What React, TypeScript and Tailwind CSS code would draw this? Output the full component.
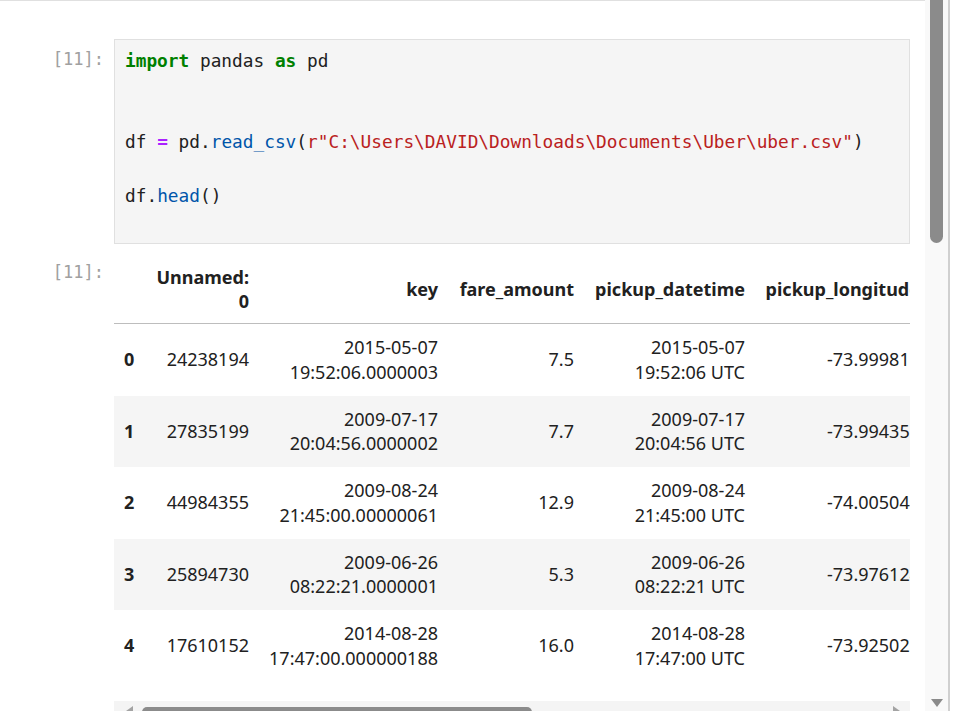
import React from 'react';

const mono = { fontFamily: '"DejaVu Sans Mono", "Liberation Mono", monospace' };

const rows = [
  ['0', '24238194', ['2015-05-07', '19:52:06.0000003'], '7.5', ['2015-05-07', '19:52:06 UTC'], '-73.999817'],
  ['1', '27835199', ['2009-07-17', '20:04:56.0000002'], '7.7', ['2009-07-17', '20:04:56 UTC'], '-73.994355'],
  ['2', '44984355', ['2009-08-24', '21:45:00.00000061'], '12.9', ['2009-08-24', '21:45:00 UTC'], '-74.005043'],
  ['3', '25894730', ['2009-06-26', '08:22:21.0000001'], '5.3', ['2009-06-26', '08:22:21 UTC'], '-73.976124'],
  ['4', '17610152', ['2014-08-28', '17:47:00.000000188'], '16.0', ['2014-08-28', '17:47:00 UTC'], '-73.925023'],
];

function Cell({ v }: { v: string | string[] }) {
  if (Array.isArray(v)) {
    return (
      <>
        {v.map((line) => (
          <div key={line}>{line}</div>
        ))}
      </>
    );
  }
  return <>{v}</>;
}

export default function App() {
  return (
    <div className="w-[970px] h-[711px] overflow-hidden bg-white flex">
      {/* NOTEBOOK */}
      <div className="w-[925px] h-full border-t border-[#e0e0e0] pt-[38px]">
        {/* input cell */}
        <div className="flex">
          <div
            className="w-[114px] pr-[10px] text-right text-[17px] leading-[27px] pt-[7px] text-[#a0a0a0]"
            style={mono}
          >
            [11]:
          </div>
          <div
            className="w-[796px] bg-[#f5f5f5] border border-[#e0e0e0] px-[10px] py-[7px] text-[17.8px] leading-[27px] text-[#212121] whitespace-pre"
            style={mono}
          >
            <div>
              <span className="text-[#008000] font-bold">import</span> pandas <span className="text-[#008000] font-bold">as</span> pd
            </div>
            <div>&nbsp;</div>
            <div>&nbsp;</div>
            <div>
              df <span className="text-[#aa22ff] font-bold">=</span> pd.<span className="text-[#0055aa]">read_csv</span>(
              <span className="text-[#ba2121]">r"C:\Users\DAVID\Downloads\Documents\Uber\uber.csv"</span>)
            </div>
            <div>&nbsp;</div>
            <div>
              df.<span className="text-[#0055aa]">head</span>()
            </div>
            <div>&nbsp;</div>
          </div>
        </div>

        {/* output cell */}
        <div className="flex mt-[11px]">
          <div
            className="w-[114px] pr-[10px] text-right text-[17px] leading-[27px] pt-[4px] text-[#a0a0a0]"
            style={mono}
          >
            [11]:
          </div>
          <div className="w-[796px]">
            <div className="overflow-hidden">
              <table
                className="table-fixed w-[816px] border-collapse text-[18px] text-[#212121]"
                style={{ fontFamily: '"Noto Sans", "Open Sans", sans-serif' }}
              >
                <colgroup>
                  <col className="w-[31px]" />
                  <col className="w-[114px]" />
                  <col className="w-[189px]" />
                  <col className="w-[136px]" />
                  <col className="w-[171px]" />
                  <col className="w-[175px]" />
                </colgroup>
                <thead>
                  <tr className="border-b border-[#bdbdbd] font-bold leading-[24px]">
                    <th className="px-[10px] py-[10px]"></th>
                    <th className="px-[10px] py-[10px] text-right align-middle">
                      <div>Unnamed:</div>
                      <div>0</div>
                    </th>
                    <th className="px-[10px] text-right align-middle whitespace-nowrap">key</th>
                    <th className="px-[10px] text-right align-middle whitespace-nowrap">fare_amount</th>
                    <th className="px-[10px] text-right align-middle whitespace-nowrap">pickup_datetime</th>
                    <th className="px-[10px] text-right align-middle whitespace-nowrap">pickup_longitude</th>
                  </tr>
                </thead>
                <tbody>
                  {rows.map((r, i) => (
                    <tr key={i} className={`leading-[24.75px] ${i % 2 === 1 ? 'bg-[#f5f5f5]' : ''}`}>
                      <th className="px-[10px] py-[11px] text-left font-bold align-middle">{r[0] as string}</th>
                      {r.slice(1).map((v, j) => (
                        <td key={j} className="px-[10px] py-[11px] text-right align-middle whitespace-nowrap">
                          <Cell v={v} />
                        </td>
                      ))}
                    </tr>
                  ))}
                </tbody>
              </table>
            </div>

            {/* horizontal scrollbar */}
            <div className="mt-[19px] h-[17px] bg-[#f4f4f4] flex items-start pt-[5px] relative">
              <svg width="14" height="10" viewBox="0 0 14 10" className="ml-[8px] mt-[0px]">
                <polygon points="4,5 11,0 11,10" fill="#a3a3a3" />
              </svg>
              <div className="ml-[6px] w-[390px] h-[10px] rounded-full bg-[#8b8b8b] mt-[1px]" />
              <div className="flex-1" />
              <svg width="14" height="10" viewBox="0 0 14 10" className="mr-[6px]">
                <polygon points="10,5 3,0 3,10" fill="#a3a3a3" />
              </svg>
            </div>
          </div>
        </div>
      </div>

      {/* vertical scrollbar */}
      <div className="w-[23px] h-full bg-[#f9f9f9] flex flex-col items-center">
        <div className="w-[13px] h-[243px] rounded-b-full rounded-t-[6px] bg-[#8b8b8b] ml-[-1px]" />
        <div className="flex-1" />
        <svg width="14" height="14" viewBox="0 0 14 14" className="mb-[0px]">
          <polygon points="1,2 13,2 7,10" fill="#8b8b8b" />
        </svg>
      </div>
      <div className="w-[2px] h-full bg-[#d0d0d0]" />
      <div className="flex-1 bg-white" />
    </div>
  );
}
